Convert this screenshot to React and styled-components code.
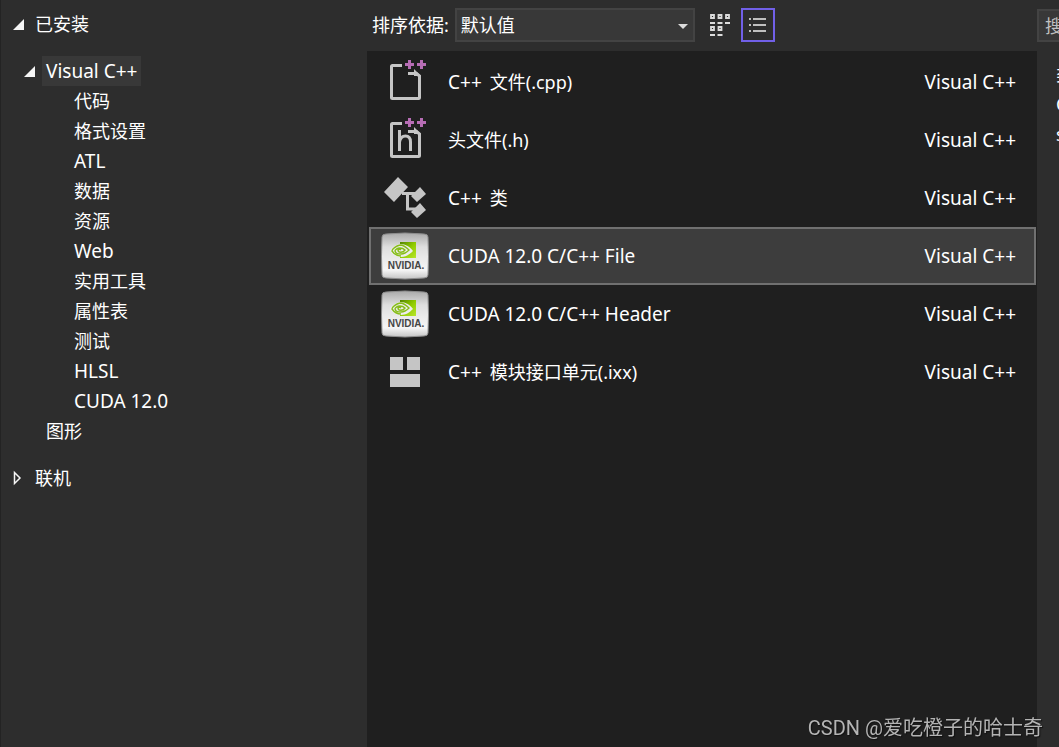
import React, { useState } from 'react';
import styled, { createGlobalStyle } from 'styled-components';

const GlobalStyle = createGlobalStyle`
      * {
            box-sizing: border-box;
      }

      body {
            margin: 0;
            background: #2d2d2d;
            color: #fff;
            font-family: "Noto Sans", "Noto Sans CJK SC", sans-serif;
            font-size: 18px;
            line-height: 30px;
      }

      button, input, select {
            font: inherit;
            color: inherit;
      }
`;

const Dialog = styled.div`
      display: flex;
      min-height: 100vh;
      overflow: hidden;
      border-left: 1px solid #232323;
`;

const Sidebar = styled.nav`
      flex: 0 0 366px;
      padding: 9px 11px;
`;

const Group = styled.section`
      margin-bottom: 17px;
`;

const TreeButton = styled.button`
      display: flex;
      align-items: center;
      gap: 6px;
      height: 30px;
      margin-left: ${({ $indent }) => $indent}px;
      padding: 0;
      border: 0;
      background: none;
      white-space: nowrap;
`;

// Latin text runs a size larger than the Chinese text
const Latin = styled.span`
      font-size: 19px;
`;

const Prefix = styled(Latin)`
      margin-right: 8px;
`;

const TreeLabel = styled.span`
      padding: 0 4px;
      background: ${({ $selected }) => ($selected ? '#383838' : 'none')};
`;

const Tree = styled.ul`
      margin: 17px 0 0;
      padding: 0;
      list-style: none;
`;

const Main = styled.main`
      flex: 1 1 0;
      display: flex;
      flex-direction: column;
      min-width: 0;
`;

const Toolbar = styled.div`
      display: flex;
      align-items: center;
      height: 51px;
      padding: 0 0 1px 5px;
`;

const SortLabel = styled.label`
      margin-right: 6px;
      white-space: nowrap;
`;

const SelectBox = styled.div`
      position: relative;
      width: 240px;
      margin-right: 8px;

      svg {
            position: absolute;
            top: 16px;
            right: 7px;
            pointer-events: none;
      }
`;

const Select = styled.select`
      display: block;
      appearance: none;
      width: 100%;
      height: 34px;
      padding: 0 4px;
      border: 2px solid #434343;
      border-radius: 0;
      background: #383838;
      line-height: 28px;
`;

const ViewButton = styled.button`
      display: flex;
      align-items: center;
      justify-content: center;
      width: 34px;
      height: 34px;
      margin-right: 4px;
      padding: 0;
      border: 2px solid ${({ $active }) => ($active ? '#7160e8' : 'transparent')};
      background: none;
`;

const Templates = styled.ul`
      flex: 1;
      margin: 0;
      padding: 2px 1px 2px 2px;
      background: #1f1f1f;
      list-style: none;
`;

const Template = styled.button`
      display: flex;
      align-items: center;
      width: 100%;
      height: 58px;
      padding: 0 18px 0 9px;
      border: 2px solid ${({ $selected }) => ($selected ? '#707070' : 'transparent')};
      background: ${({ $selected }) => ($selected ? '#3d3d3d' : 'none')};
      text-align: left;
      white-space: nowrap;
`;

const TemplateName = styled.span`
      flex: 1;
      margin-left: 18px;
`;

const Details = styled.aside`
      flex: 0 0 22px;
      min-width: 0;
      padding-top: 9px;
      overflow: hidden;
      white-space: nowrap;
`;

const Search = styled.input`
      display: block;
      width: 300px;
      height: 33px;
      padding: 0 6px;
      border: 2px solid #434343;
      background: #383838;

      &::placeholder {
            color: #c0c0c0;
            opacity: 1;
      }
`;

const Description = styled.div`
      margin: 17px 0 0 19px;
`;

const Watermark = styled.div`
      position: fixed;
      right: 16px;
      bottom: 4px;
      color: #b4b4b4;
      font-family: Roboto, "Noto Sans CJK SC", sans-serif;
      font-size: 20px;
      text-shadow: 1px 1px 1px #111;
`;

const Arrow = ({ open }) => (
      <svg width="13" height="16" viewBox="0 0 13 16">
            {open
                  ? <path d="M12 3v11H1z" fill="#f5f5f5" />
                  : <path d="M2.5 2.5v11l5.5-5.5z" fill="none" stroke="#f5f5f5" strokeWidth="1.5" />}
      </svg>
);

const FileIcon = ({ header }) => (
      <svg width="50" height="50" viewBox="0 0 50 50">
            <path d="M22 8.500H12.500q-1 0-1 1v31q0 1 1 1h26q1 0 1-1V19l-3-2.500H28" fill="none" stroke="#c5c5c5" strokeWidth="3" />
            <path d="M34 12l7 7h-7z" fill="#c5c5c5" />
            {header && <path d="M19.500 15v21M19.500 27q1-6 6-6 5 0 5 6v9" fill="none" stroke="#c5c5c5" strokeWidth="3" />}
            <path d="M25 6h3V3h3v3h3v3h-3v3h-3V9h-3zM37 6h3V3h3v3h3v3h-3v3h-3V9h-3z" fill="#b76db5" />
      </svg>
);

const ClassIcon = () => (
      <svg width="50" height="50" viewBox="0 0 50 50">
            <path d="M4 19L18 4l10 10-14 15zM31 23l9-9 6 7-9 8zM31 39l9-9 6 7-9 8z" fill="#c5c5c5" />
            <path d="M22 20.500h14M27.500 20v16H36" fill="none" stroke="#c5c5c5" strokeWidth="3" />
      </svg>
);

const NvidiaIcon = () => (
      <svg width="50" height="50" viewBox="0 0 50 50">
            <defs>
                  <linearGradient id="plate" x1="0" y1="0" x2="0" y2="1">
                        <stop offset="0" stopColor="#a9a9a9" />
                        <stop offset=".3" stopColor="#dedede" />
                        <stop offset=".8" stopColor="#f6f6f6" />
                        <stop offset="1" stopColor="#c4c4c4" />
                  </linearGradient>
                  <linearGradient id="eye" x1="0" y1="0" x2="1" y2="1">
                        <stop offset="0" stopColor="#528300" />
                        <stop offset=".5" stopColor="#8fca00" />
                        <stop offset="1" stopColor="#b8e62b" />
                  </linearGradient>
            </defs>
            <path d="M6 3Q25 1 44 3q4 0 4 3 1 20 0 38 0 3-4 3-19 2-38 0-4 0-4-3-1-18 0-38 0-3 4-3z" fill="url(#plate)" stroke="#8c8c8c" />
            <path d="M20 11h16v16H20z" fill="url(#eye)" />
            <path d="M20 13c-5 1-10 5-10 7 2 4 7 6 11 6 5 0 9-3 12-6-3-4-7-7-13-7z" fill="#ededed" />
            <path d="M20 14c-4 1-8 4-8 6 2 3 5 5 9 5m-1-8c-3 0-5 2-5 3 1 3 3 3 6 3 4 0 6-2 8-4-3-3-5-5-9-5m0 3c3 0 4 1 5 2-2 3-7 3-7 0 1-1 2-1 3 0" fill="none" stroke="#86bd18" strokeWidth="1.4" />
            <text x="26" y="38" textAnchor="middle" fill="#454545" fontFamily="Liberation Sans, sans-serif" fontWeight="bold" fontSize="10">NVIDIA.</text>
      </svg>
);

const ModuleIcon = () => (
      <svg width="50" height="50" viewBox="0 0 50 50">
            <path d="M10 10h13v13H10zM27 10h13v13H27zM10 27h30v13H10z" fill="#c5c5c5" />
      </svg>
);

const GridIcon = () => (
      <svg width="20" height="22" viewBox="0 0 20 22" fill="none" stroke="#dcdcdc" strokeWidth="1.800">
            <path d="M1 1h3v3H1zM8.500 1h3v3h-3zM16 1h3v3h-3zM1 13h3v3H1zM8.500 13h3v3h-3zM0 9h5M7.500 9h5M15 9h5M0 21h5M7.500 21h5" />
      </svg>
);

const ListIcon = () => (
      <svg width="18" height="16" viewBox="0 0 18 16" fill="none" stroke="#f0f0f0" strokeWidth="1.600">
            <path d="M0 2h2M4 2h13M0 8h2M4 8h13M0 14h2M4 14h13" />
      </svg>
);

const categories = ['代码', '格式设置', 'ATL', '数据', '资源', 'Web', '实用工具', '属性表', '测试', 'HLSL', 'CUDA 12.0'];

const templates = [
      { prefix: 'C++', name: '文件(.cpp)', icon: <FileIcon /> },
      { name: '头文件(.h)', icon: <FileIcon header /> },
      { prefix: 'C++', name: '类', icon: <ClassIcon /> },
      { name: 'CUDA 12.0 C/C++ File', icon: <NvidiaIcon /> },
      { name: 'CUDA 12.0 C/C++ Header', icon: <NvidiaIcon /> },
      { prefix: 'C++', name: '模块接口单元(.ixx)', icon: <ModuleIcon /> },
];

const Name = ({ text }) => (/^[\x20-\x7e]+$/.test(text) ? <Latin>{text}</Latin> : text);

const App = () => {
      const [selected, setSelected] = useState(3);
      const [view, setView] = useState('list');

      return (
            <>
                  <GlobalStyle />
                  <Dialog>
                        <Sidebar>
                              <Group>
                                    <TreeButton $indent={0}>
                                          <Arrow open />
                                          <TreeLabel>已安装</TreeLabel>
                                    </TreeButton>
                                    <Tree>
                                          <li>
                                                <TreeButton $indent={11}>
                                                      <Arrow open />
                                                      <TreeLabel $selected><Name text="Visual C++" /></TreeLabel>
                                                </TreeButton>
                                          </li>
                                          {categories.map((name) => (
                                                <li key={name}>
                                                      <TreeButton $indent={58}>
                                                            <TreeLabel><Name text={name} /></TreeLabel>
                                                      </TreeButton>
                                                </li>
                                          ))}
                                          <li>
                                                <TreeButton $indent={30}>
                                                      <TreeLabel>图形</TreeLabel>
                                                </TreeButton>
                                          </li>
                                    </Tree>
                              </Group>
                              <TreeButton $indent={0}>
                                    <Arrow />
                                    <TreeLabel>联机</TreeLabel>
                              </TreeButton>
                        </Sidebar>
                        <Main>
                              <Toolbar>
                                    <SortLabel htmlFor="sort">排序依据:</SortLabel>
                                    <SelectBox>
                                          <Select id="sort">
                                                <option>默认值</option>
                                          </Select>
                                          <svg width="10" height="6" viewBox="0 0 10 6">
                                                <path d="M0 0h10L5 5z" fill="#dcdcdc" />
                                          </svg>
                                    </SelectBox>
                                    <ViewButton
                                          aria-label="中等图标"
                                          $active={view === 'grid'}
                                          onClick={() => setView('grid')}
                                    >
                                          <GridIcon />
                                    </ViewButton>
                                    <ViewButton
                                          aria-label="小图标"
                                          $active={view === 'list'}
                                          onClick={() => setView('list')}
                                    >
                                          <ListIcon />
                                    </ViewButton>
                              </Toolbar>
                              <Templates>
                                    {templates.map(({ prefix, name, icon }, i) => (
                                          <li key={name}>
                                                <Template $selected={selected === i} onClick={() => setSelected(i)}>
                                                      {icon}
                                                      <TemplateName>
                                                            {prefix && <Prefix>{prefix}</Prefix>}
                                                            <Name text={name} />
                                                      </TemplateName>
                                                      <Latin>Visual C++</Latin>
                                                </Template>
                                          </li>
                                    ))}
                              </Templates>
                        </Main>
                        <Details>
                              <Search aria-label="搜索" placeholder="搜索" />
                              <Description>
                                    <div>类型: Visual C++</div>
                                    <div>CUDA C/C++</div>
                                    <div>source file</div>
                              </Description>
                        </Details>
                  </Dialog>
                  <Watermark>CSDN @爱吃橙子的哈士奇</Watermark>
            </>
      );
};

export default App;
